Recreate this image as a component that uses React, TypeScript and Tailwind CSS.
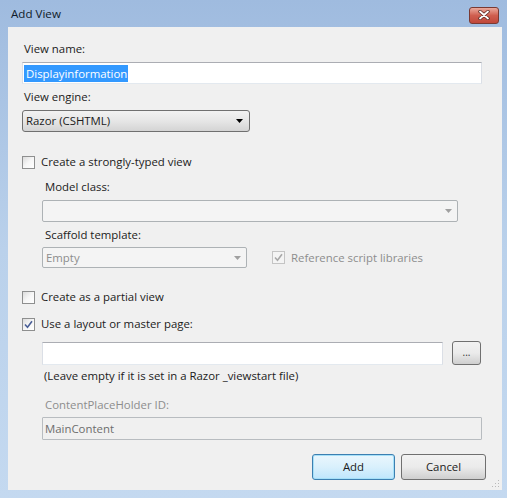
import React from 'react';

const font = { fontFamily: '"Segoe UI", "Open Sans", "Noto Sans", sans-serif' };

function Check({ checked, disabled }: { checked?: boolean; disabled?: boolean }) {
    return (
        <span
            className={`w-[13px] h-[13px] shrink-0 border flex items-center justify-center ${disabled ? 'border-[#c4c4c4] bg-[#f4f4f4]' : 'border-[#8e8f8f] bg-gradient-to-br from-[#dcdcdc] via-[#f6f6f6] to-[#ffffff]'}`}
        >
            {checked && (
                <svg width="9" height="9" viewBox="0 0 9 9">
                    <path d="M1 4.5 L3.5 7.2 L8 1.2" fill="none" stroke={disabled ? '#a8a8a8' : '#4a5f97'} strokeWidth="1.6" />
                </svg>
            )}
        </span>
    );
}

function Arrow({ color }: { color: string }) {
    return (
        <svg width="7" height="4" viewBox="0 0 7 4">
            <path d="M0 0 H7 L3.5 4 Z" fill={color} />
        </svg>
    );
}

function AddViewDialog() {
    return (
        <div className="w-[507px] h-[498px] flex flex-col bg-gradient-to-b from-[#9fbbdf] via-[#bad1eb] to-[#c4d9f0] text-[11.4px] text-[#1b1b1b]" style={font}>
            {/* title bar */}
            <div className="h-[27px] flex items-center justify-between pl-[11px] pr-[8px]">
                <span className="text-[11.6px] text-[#0f1b2a]">Add View</span>
                <span className="w-[30px] h-[17px] mt-[3px] rounded-[3px] border border-[#7a3a33] bg-gradient-to-b from-[#e9a99d] via-[#cf5e4f] to-[#c0473a] flex items-center justify-center">
                    <svg width="12" height="10" viewBox="0 0 12 10">
                        <path d="M2 1.5 L10 8.5 M10 1.5 L2 8.5" stroke="#5a2a24" strokeWidth="3.4" strokeLinecap="round" />
                        <path d="M2 1.5 L10 8.5 M10 1.5 L2 8.5" stroke="#ffffff" strokeWidth="1.8" strokeLinecap="round" />
                    </svg>
                </span>
            </div>

            {/* client area */}
            <div className="ml-[8px] mr-[5px] h-[463px] bg-[#f0f0f0] relative flex flex-col pl-[14px] pr-[20px]">
                <label className="mt-[14px] h-[16px] leading-[16px] pl-[2px]">View name:</label>
                <div className="mt-[5px] h-[22px] w-[460px] bg-white border border-[#abadb3] border-l-[#dbdfe6] border-r-[#dbdfe6] border-b-[#e3e9ef] flex items-center pl-[1px]">
                    <span className="bg-[#3399ff] text-white h-[17px] leading-[17px] pl-[2px] pr-[1px]">Displayinformation</span>
                </div>

                <label className="mt-[5px] h-[16px] leading-[16px] pl-[2px]">View engine:</label>
                <div className="mt-[5px] h-[22px] w-[228px] rounded-[3px] border border-[#707070] bg-gradient-to-b from-[#f2f2f2] via-[#e6e6e6] to-[#d4d4d4] flex items-center justify-between pl-[3px] pr-[6px]">
                    <span>Razor (CSHTML)</span>
                    <Arrow color="#000000" />
                </div>

                <div className="mt-[22px] h-[16px] flex items-center gap-[6px]">
                    <Check />
                    <span>Create a strongly-typed view</span>
                </div>

                <div className="pl-[20px] flex flex-col">
                    <label className="mt-[9px] h-[16px] leading-[16px] pl-[3px]">Model class:</label>
                    <div className="mt-[5px] h-[22px] w-[416px] rounded-[2px] border border-[#adb2b5] bg-[#f4f4f4] flex items-center justify-end pr-[5px]">
                        <Arrow color="#a0a0a0" />
                    </div>

                    <label className="mt-[5px] h-[16px] leading-[16px] pl-[3px]">Scaffold template:</label>
                    <div className="mt-[4px] h-[21px] flex items-center">
                        <div className="h-[21px] w-[205px] rounded-[2px] border border-[#adb2b5] bg-[#f4f4f4] flex items-center justify-between pl-[3px] pr-[5px] text-[#8d8d8d]">
                            <span>Empty</span>
                            <Arrow color="#a0a0a0" />
                        </div>
                        <div className="ml-[25px] flex items-center gap-[6px] text-[#8d8d8d]">
                            <Check checked disabled />
                            <span>Reference script libraries</span>
                        </div>
                    </div>
                </div>

                <div className="mt-[21px] h-[16px] flex items-center gap-[6px]">
                    <Check />
                    <span>Create as a partial view</span>
                </div>

                <div className="mt-[11px] h-[16px] flex items-center gap-[6px]">
                    <Check checked />
                    <span>Use a layout or master page:</span>
                </div>

                <div className="pl-[20px] flex flex-col">
                    <div className="mt-[9px] h-[24px] flex items-center">
                        <div className="h-[23px] w-[401px] bg-white border border-[#abadb3] border-l-[#dbdfe6] border-r-[#dbdfe6] border-b-[#e3e9ef]" />
                        <button className="ml-[9px] h-[24px] w-[29px] rounded-[3px] border border-[#707070] bg-gradient-to-b from-[#f2f2f2] via-[#ebebeb] to-[#cfcfcf] text-[10px] leading-none pb-[2px] text-[#333]">...</button>
                    </div>
                    <span className="mt-[3px] h-[16px] leading-[16px] pl-[2px]">(Leave empty if it is set in a Razor _viewstart file)</span>

                    <label className="mt-[13px] h-[16px] leading-[16px] pl-[3px] text-[#8d8d8d]">ContentPlaceHolder ID:</label>
                    <div className="mt-[4px] h-[23px] w-[440px] rounded-[1px] border border-[#b8bcc0] bg-[#f0f0f0] flex items-center pl-[2px] text-[#6d6d6d]">
                        MainContent
                    </div>
                </div>

                <div className="mt-[14px] -mr-[4px] flex justify-end gap-[6px]">
                    <button className="h-[26px] w-[83px] rounded-[3px] border border-[#3c7fb1] bg-gradient-to-b from-[#eaf6fd] via-[#d9f0fc] to-[#bee6fd] shadow-[inset_0_0_0_1px_#a6e0f8]">Add</button>
                    <button className="h-[26px] w-[85px] rounded-[3px] border border-[#707070] bg-gradient-to-b from-[#f2f2f2] via-[#ebebeb] to-[#cfcfcf]">Cancel</button>
                </div>

                {/* size grip */}
                <svg className="absolute right-[2px] bottom-[2px]" width="10" height="10" viewBox="0 0 10 10">
                    <g fill="#b9b9b9">
                        <rect x="8" y="2" width="1" height="1" />
                        <rect x="5" y="5" width="1" height="1" />
                        <rect x="8" y="5" width="1" height="1" />
                        <rect x="2" y="8" width="1" height="1" />
                        <rect x="5" y="8" width="1" height="1" />
                        <rect x="8" y="8" width="1" height="1" />
                    </g>
                </svg>
            </div>
        </div>
    );
}

export default function App() {
    return <AddViewDialog />;
}
